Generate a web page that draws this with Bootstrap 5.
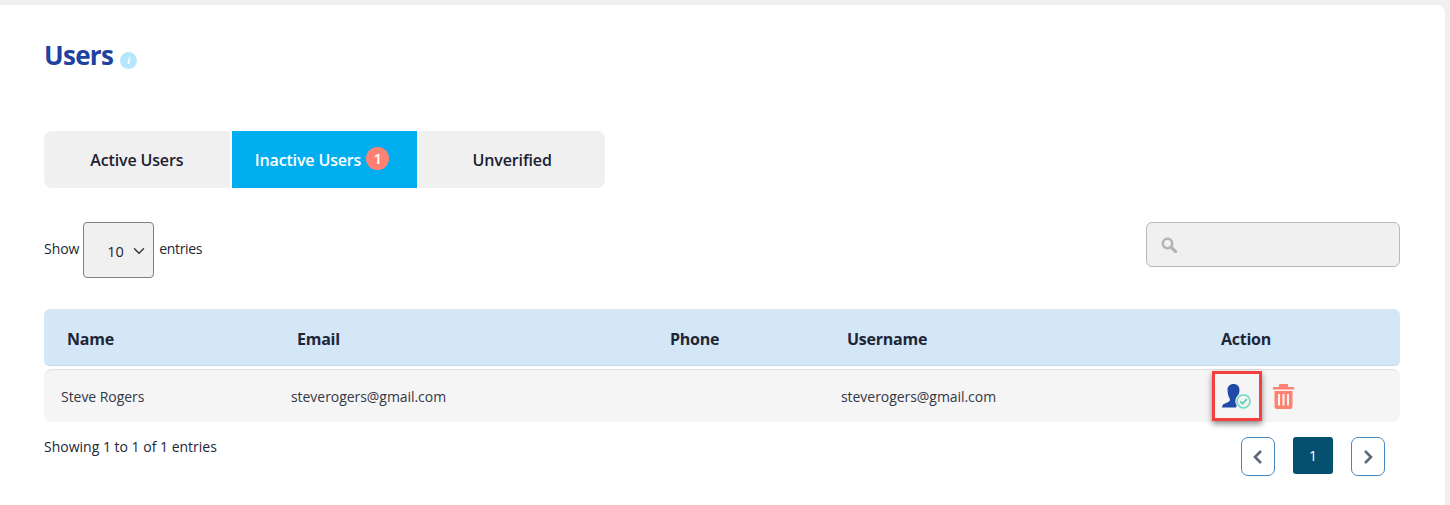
<!DOCTYPE html>
<html lang="en">
<head>
<meta charset="utf-8">
<title>Users</title>
<link href="https://cdn.jsdelivr.net/npm/bootstrap@5.3.0/dist/css/bootstrap.min.css" rel="stylesheet">
<style>
html,body{height:100%;}
body{background:#f0f0f0;font-family:"Open Sans","Noto Sans",sans-serif;font-size:14px;color:#212636;overflow:hidden;letter-spacing:-.05px;}
.shell{padding:5px 5px 0 0;height:505px;}
.sheet{background:#fff;border-top-right-radius:8px;height:100%;padding:0 45px 0 44px;}
.page-title{height:126px;padding-top:32px;color:#1f41a0;font-size:26px;font-weight:700;line-height:36px;letter-spacing:-.7px;margin:0;}
.info-dot{width:17px;height:17px;border-radius:50%;background:#b5e6fb;color:#fff;font:italic 700 11px/17px "Liberation Serif",serif;text-align:center;margin-left:1px;vertical-align:1px;display:inline-block;letter-spacing:0;}
.tab-strip{width:561px;height:57px;gap:2px;border-radius:8px;overflow:hidden;}
.tab-item{flex:1 1 0;background:#f0f0f0;color:#1b2032;font-size:16px;font-weight:600;border:0;padding:0;letter-spacing:-.15px;}
.tab-item.is-on{background:#00aeef;color:#fff;}
.count-pill{width:23px;height:23px;border-radius:50%;background:#ff8172;color:#fff;font-size:15px;font-weight:600;line-height:23px;display:inline-block;margin:0 5px 0 1px;vertical-align:2px;letter-spacing:0;}
.tools{margin-top:34px;height:87px;}
.tools-left{margin-top:-4px;}
.len-select{width:71px;height:56px;background-color:#f0f0f0;border:1px solid #7a8087;border-radius:4px;padding:4px 0 0 23px;font-size:14.500px;color:#212636;margin:4px 5px 0 4px;background-position:right 6px top 22px;background-size:16px 12px;box-shadow:none;letter-spacing:-.2px;}
.entries-word{letter-spacing:-.35px;}
.find-box{width:254px;height:45px;background:#f0f0f0;border:1px solid #bdb8b8;border-radius:6px;padding:0 0 0 14px;}
.user-table{width:1356px;border-collapse:separate;border-spacing:0;table-layout:fixed;margin:0;}
.user-table th{background:#d3e7f6;height:57px;padding:3px 0 0 23px;font-size:16px;font-weight:700;color:#212636;border-bottom:1px solid #c7dcec;vertical-align:middle;letter-spacing:-.25px;}
.user-table th:first-child{border-radius:6px 0 0 6px;}
.user-table th:last-child{border-radius:0 6px 6px 0;}
.user-table td{background:#f5f5f5;height:53px;padding:0 0 0 17px;font-size:14px;color:#333845;border-top:1px solid #e2e0e0;vertical-align:middle;}
.user-table td:first-child{border-radius:8px 0 0 8px;}
.user-table td:last-child{border-radius:0 8px 8px 0;}
.gap-row td{height:3px;padding:0;background:transparent;border:0;}
.mark-box{width:50px;height:50px;border:3px solid #f43f3f;box-shadow:0 3px 6px rgba(0,0,0,.45);margin-left:-3px;}
.trash-wrap{margin-left:11px;}
.foot{margin-top:15px;}
.page-btn{width:34px;height:39px;border:1px solid #4a86bf;border-radius:7px;background:#fff;}
.page-cur{width:40px;height:37px;background:#054f6f;color:#fff;border-radius:3px;font-size:14px;font-weight:400;}
.pager{gap:18px;padding-right:15px;padding-top:0;}
.foot-note{margin-top:-1px;letter-spacing:0;}
</style>
</head>
<body>
<div class="shell">
  <div class="sheet">
    <h1 class="page-title">Users <span class="info-dot">i</span></h1>
    <div class="tab-strip d-flex">
      <button class="tab-item" type="button">Active Users</button>
      <button class="tab-item is-on" type="button">Inactive Users <span class="count-pill">1</span></button>
      <button class="tab-item" type="button">Unverified</button>
    </div>
    <div class="tools d-flex justify-content-between align-items-start">
      <div class="tools-left d-flex align-items-center">
        <span>Show</span>
        <select class="form-select len-select" aria-label="Entries"><option>10</option></select>
        <span class="entries-word">entries</span>
      </div>
      <div class="find-box d-flex align-items-center">
        <svg width="16" height="16" viewBox="0 0 16 16" fill="none" stroke="#b9b2b2" aria-hidden="true"><circle cx="6.500" cy="6.500" r="4.700" stroke-width="2.600"/><path d="M10 10l4.600 4.600" stroke-width="3.200" stroke-linecap="round"/></svg>
      </div>
    </div>
    <table class="user-table">
      <colgroup><col style="width:230px"><col style="width:373px"><col style="width:177px"><col style="width:374px"><col style="width:202px"></colgroup>
      <thead><tr><th>Name</th><th>Email</th><th>Phone</th><th>Username</th><th>Action</th></tr></thead>
      <tbody>
        <tr class="gap-row"><td colspan="5"></td></tr>
        <tr>
          <td>Steve Rogers</td><td>steverogers@gmail.com</td><td></td><td>steverogers@gmail.com</td>
          <td>
            <div class="d-flex align-items-center">
              <div class="mark-box d-flex align-items-center justify-content-center">
                <svg width="30" height="25" viewBox="0 0 30 25" aria-hidden="true"><path fill="#1f4aa8" d="M11.500 0c3.800 0 6 2.500 6 6 0 2.800-1 5-2 6.500-.5.800-.5 1.700.2 2.300l1.300 1-3 7.700H0c.1-1.600.6-2.800 2-3.500 2-1 4-1.600 5.300-2.700.8-.7.800-1.900.300-2.800C6.500 12.500 5.500 9.500 5.500 6c0-3.500 2.200-6 6-6z"/><circle cx="21.500" cy="17.300" r="8.200" fill="#f5f5f5"/><circle cx="21.500" cy="17.300" r="6.500" fill="#f5f5f5" stroke="#79dcc3" stroke-width="1.800"/><path d="M18.200 17.300l2.400 2.400 4.300-4.500" fill="none" stroke="#5fcfb3" stroke-width="1.800"/></svg>
              </div>
              <div class="trash-wrap">
                <svg width="21" height="25" viewBox="0 0 21 25" aria-hidden="true"><path fill="#ff8172" fill-rule="evenodd" d="M7 0h7a1 1 0 0 1 1 1v2h6v2.500H0V3h6V1a1 1 0 0 1 1-1zM1.500 7h18v15.500a2.500 2.500 0 0 1-2.500 2.500H4a2.500 2.500 0 0 1-2.500-2.500zM5 10v11.500h2V10zm4.500 0v11.500h2V10zM14 10v11.500h2V10z"/></svg>
              </div>
            </div>
          </td>
        </tr>
      </tbody>
    </table>
    <div class="foot d-flex justify-content-between align-items-start">
      <div class="foot-note">Showing 1 to 1 of 1 entries</div>
      <div class="pager d-flex align-items-start">
        <button class="page-btn p-0 d-flex align-items-center justify-content-center" type="button" aria-label="Previous"><svg width="10" height="14" viewBox="0 0 10 14" fill="none" stroke="#5c6a78" stroke-width="2.600" aria-hidden="true"><path d="M8 1L2 7l6 6"/></svg></button>
        <div class="page-cur d-flex align-items-center justify-content-center">1</div>
        <button class="page-btn p-0 d-flex align-items-center justify-content-center" type="button" aria-label="Next"><svg width="10" height="14" viewBox="0 0 10 14" fill="none" stroke="#5c6a78" stroke-width="2.600" aria-hidden="true"><path d="M2 1l6 6-6 6"/></svg></button>
      </div>
    </div>
  </div>
</div>
<script src="https://cdn.jsdelivr.net/npm/bootstrap@5.3.0/dist/js/bootstrap.bundle.min.js"></script>
</body>
</html>
